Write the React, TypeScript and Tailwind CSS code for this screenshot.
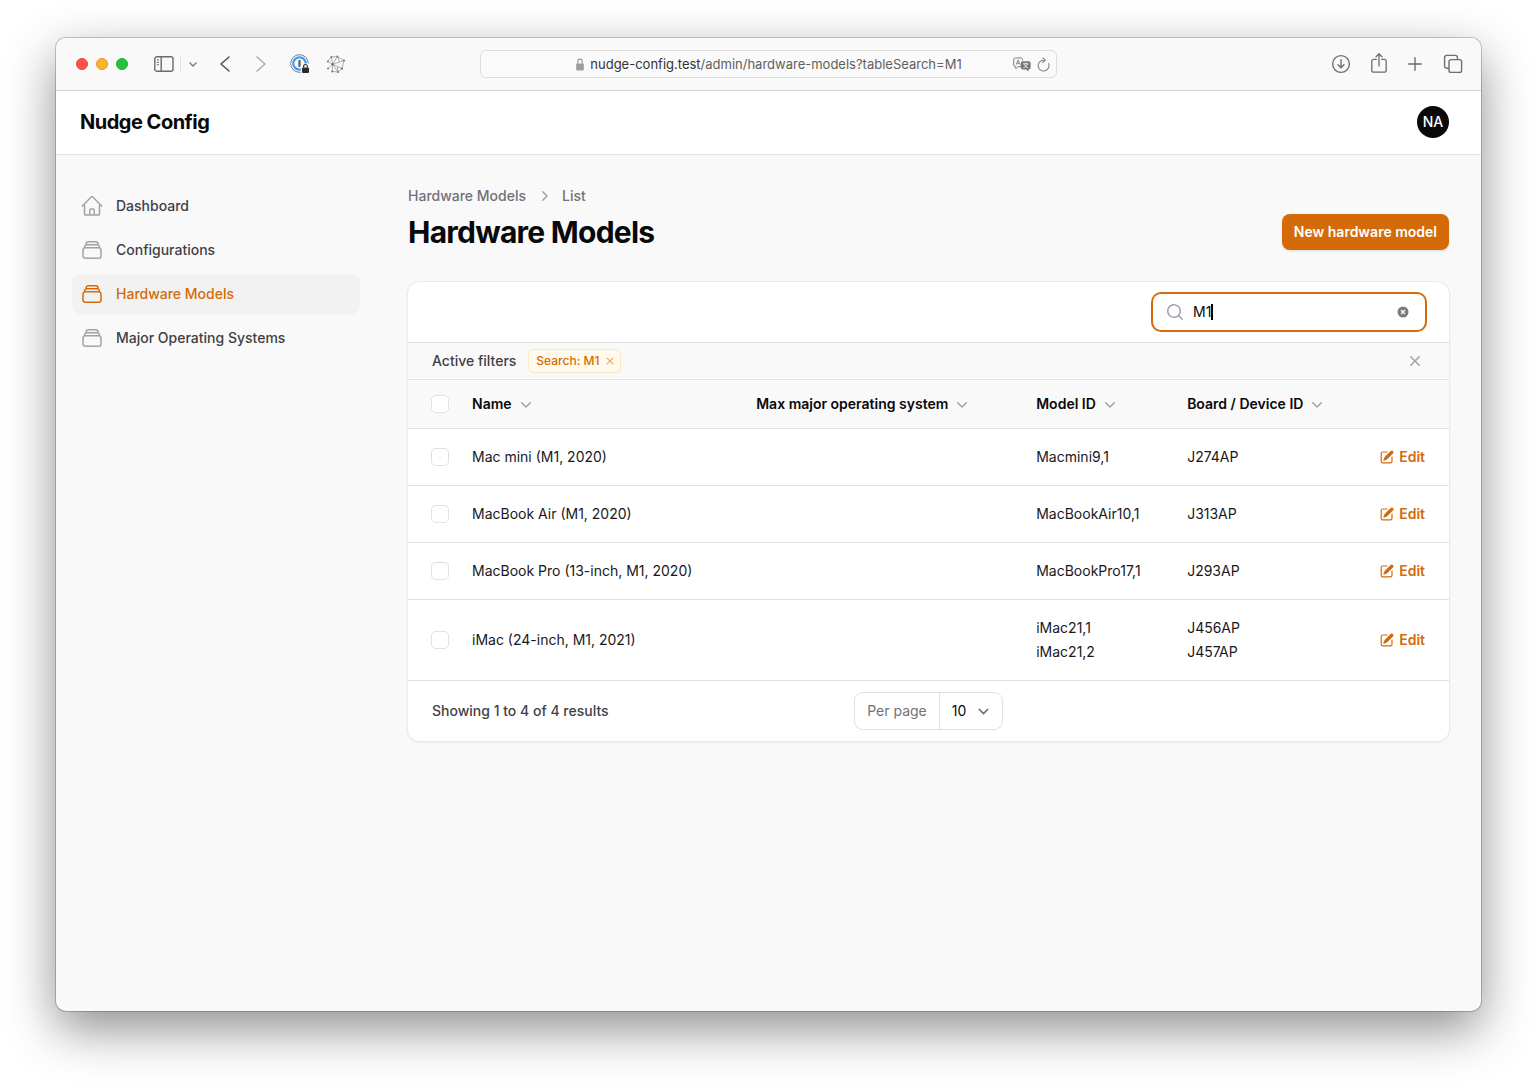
import React, { useState } from "react";
import {
  HiOutlineHome,
  HiOutlineRectangleStack,
  HiMiniChevronDown,
  HiMiniChevronRight,
  HiMiniPencilSquare,
  HiMiniXMark,
  HiMiniMagnifyingGlass,
} from "react-icons/hi2";

const SidebarIcon = () => (
  <svg width="20" height="16" viewBox="0 0 20 16" fill="none" stroke="#6a6a6a" strokeWidth="1.4">
    <rect x="0.8" y="0.8" width="18.2" height="14.4" rx="2" />
    <path d="M7.2 1v14" />
    <path d="M2.8 4h2.2M2.8 6.4h2.2M2.8 8.8h2.2" strokeWidth="1" />
  </svg>
);

const Chevron = ({ d, w, h, color, stroke }: { d: string; w: number; h: number; color: string; stroke: number }) => (
  <svg width={w} height={h} viewBox={`0 0 ${w} ${h}`} fill="none" stroke={color} strokeWidth={stroke} strokeLinecap="round" strokeLinejoin="round">
    <path d={d} />
  </svg>
);

const PasswordIcon = () => (
  <svg width="20" height="20" viewBox="0 0 20 20" fill="none">
    <circle cx="9.5" cy="9.5" r="8.8" stroke="#7b7b7b" strokeWidth="1" />
    <circle cx="9.5" cy="9.5" r="6.2" stroke="#3f9bff" strokeWidth="2.2" />
    <rect x="8.4" y="6" width="2.2" height="7" rx="0.6" fill="#5a5a5a" />
    <rect x="10.8" y="9.4" width="9.2" height="10.6" rx="2" fill="#f9f9f9" />
    <rect x="12" y="13.4" width="7" height="5.6" rx="1" fill="#2a2a2a" />
    <path d="M13.6 13.6v-1.2a1.9 1.9 0 0 1 3.8 0v1.2" stroke="#2a2a2a" strokeWidth="1.2" />
  </svg>
);

const NetworkIcon = () => (
  <svg width="20" height="20" viewBox="0 0 20 20" fill="none" stroke="#8e8e8e" strokeWidth="0.7">
    <path d="M6.6 10.2L5.4 3M6.6 10.2L11.4 2.6M6.6 10.2L18 6.6M6.6 10.2L1.8 7.4M6.6 10.2L2 14.4M6.6 10.2L6.2 17.4M6.6 10.2L12 18M6.6 10.2L16 14.6" />
    <path d="M1.8 7.4L5.4 3L11.4 2.6L18 6.6L16 14.6L12 18L6.2 17.4M11.4 2.6L13.6 8M12 18L11.4 12.4" />
    <g fill="#7a7a7a" stroke="none">
      <circle cx="6.6" cy="10.2" r="1.3" />
      <circle cx="5.4" cy="3" r="1" />
      <circle cx="11.4" cy="2.6" r="1" />
      <circle cx="18" cy="6.6" r="1.1" />
      <circle cx="1.8" cy="7.4" r="1" />
      <circle cx="2" cy="14.4" r="1" />
      <circle cx="6.2" cy="17.4" r="1" />
      <circle cx="12" cy="18" r="1.1" />
      <circle cx="16" cy="14.6" r="1.1" />
    </g>
  </svg>
);

const LockIcon = () => (
  <svg width="8" height="13" viewBox="0 0 8 13" fill="none">
    <rect x="0.2" y="5.4" width="7.6" height="7" rx="1.2" fill="#9c9c9c" />
    <path d="M1.8 6V3.4a2.2 2.2 0 0 1 4.4 0V6" stroke="#9c9c9c" strokeWidth="1.2" />
  </svg>
);

const TranslateIcon = () => (
  <svg width="18" height="15" viewBox="0 0 18 15" fill="none">
    <path d="M8 9.6H5L2.8 11.8V9.6H2.4A1.7 1.7 0 0 1 .7 7.9V2.6A1.7 1.7 0 0 1 2.4.9h5.4a1.7 1.7 0 0 1 1.7 1.7v1" stroke="#7f7f7f" strokeWidth="1" />
    <path d="M3.2 7.8L5.1 2.8L7 7.8M3.9 6.2h2.5" stroke="#7f7f7f" strokeWidth="0.9" />
    <path d="M9.6 4.2h6.2A1.8 1.8 0 0 1 17.6 6v4.6a1.8 1.8 0 0 1-1.8 1.8h-.3v2.2l-2.3-2.2H9.6a1.8 1.8 0 0 1-1.8-1.8V6a1.8 1.8 0 0 1 1.8-1.8Z" fill="#757575" />
    <path d="M10 6.8h5.4M12.7 5.6v1.2M14.4 6.9c-.5 1.8-2 3.2-4 3.9M11.2 7.2c.6 1.7 2 3 3.9 3.6" stroke="#f9f9f9" strokeWidth="0.9" />
  </svg>
);

const ReloadIcon = () => (
  <svg width="13" height="15" viewBox="0 0 13 15" fill="none" stroke="#858585" strokeWidth="1.1" strokeLinecap="round" strokeLinejoin="round">
    <path d="M11.6 6.6A5.4 5.4 0 1 1 6.5 3.2h1.4" />
    <path d="M5.8 0.8L8.2 3.2L5.8 5.6" />
  </svg>
);

const toolbarIcon = "flex h-7 items-center justify-center";

function BrowserBar() {
  return (
    <div className="grid h-[52px] shrink-0 grid-cols-[1fr_40.5%_1fr] items-center bg-[#f9f9f9]">
      <div className="flex items-center pl-5">
        <div className="flex gap-2">
          <button aria-label="Close window" className="size-3 rounded-full border border-[#e2443c] bg-[#ff5149]" />
          <button aria-label="Minimise window" className="size-3 rounded-full border border-[#e09c1e] bg-[#fdb32a]" />
          <button aria-label="Zoom window" className="size-3 rounded-full border border-[#1eae2e] bg-[#25c138]" />
        </div>
        <button aria-label="Sidebar" className={`${toolbarIcon} ml-6 w-6`}><SidebarIcon /></button>
        <span className="ml-1 h-[18px] w-px bg-[#e4e4e4]" />
        <button aria-label="Sidebar options" className={`${toolbarIcon} w-6`}>
          <Chevron d="M1 1l3 3l3-3" w={8} h={5} color="#7a7a7a" stroke={1.4} />
        </button>
        <button aria-label="Back" className={`${toolbarIcon} ml-2 w-6`}>
          <Chevron d="M9 1L1 8L9 15" w={10} h={16} color="#505050" stroke={1.5} />
        </button>
        <button aria-label="Forward" className={`${toolbarIcon} ml-3 w-6`}>
          <Chevron d="M1 1L9 8L1 15" w={10} h={16} color="#acacac" stroke={1.5} />
        </button>
        <button aria-label="Password manager" className={`${toolbarIcon} ml-[15px] w-6`}><PasswordIcon /></button>
        <button aria-label="Network extension" className={`${toolbarIcon} ml-3 w-6`}><NetworkIcon /></button>
      </div>
      <div className="flex h-7 items-center rounded-md border border-[#dcdcdc] bg-[#fafafa] pr-1.5 pl-11">
        <div className="flex flex-1 items-center justify-center gap-1.5 text-[13px] leading-4 text-[#606060]">
          <LockIcon />
          <span><span className="text-[#333333]">nudge-config.test</span>/admin/hardware-models?tableSearch=M1</span>
        </div>
        <div className="flex items-center gap-1.5">
          <button aria-label="Translate"><TranslateIcon /></button>
          <button aria-label="Reload"><ReloadIcon /></button>
        </div>
      </div>
      <div className="flex items-center justify-end gap-3 pr-4">
        <button aria-label="Downloads" className={`${toolbarIcon} w-6`}>
          <svg width="20" height="20" viewBox="0 0 20 20" fill="none" stroke="#6e6e6e" strokeWidth="1.4" strokeLinecap="round" strokeLinejoin="round">
            <circle cx="10" cy="10" r="8.4" />
            <path d="M10 5.6v8M7 10.8l3 3l3-3" />
          </svg>
        </button>
        <button aria-label="Share" className={`${toolbarIcon} w-7`}>
          <svg width="16" height="22" viewBox="0 0 16 22" fill="none" stroke="#6e6e6e" strokeWidth="1.3" strokeLinecap="round" strokeLinejoin="round">
            <path d="M5.2 6.4H2.6A1.8 1.8 0 0 0 .8 8.2v9.2A1.8 1.8 0 0 0 2.6 19.2h10.800a1.8 1.8 0 0 0 1.8-1.8V8.2A1.8 1.8 0 0 0 13.4 6.4h-2.6" />
            <path d="M8 13V.9M5 3.7l3-3l3 3" />
          </svg>
        </button>
        <button aria-label="New tab" className={`${toolbarIcon} w-5`}>
          <svg width="14" height="14" viewBox="0 0 14 14" fill="none" stroke="#6e6e6e" strokeWidth="1.4" strokeLinecap="round">
            <path d="M7 0.7v12.6M0.7 7h12.6" />
          </svg>
        </button>
        <button aria-label="Tab overview" className={`${toolbarIcon} ml-1 w-6`}>
          <svg width="20" height="20" viewBox="0 0 20 20" fill="none" stroke="#6e6e6e" strokeWidth="1.4" strokeLinejoin="round">
            <rect x="6" y="5.6" width="12.6" height="12.8" rx="2" />
            <path d="M5.8 14.2H3.6a2 2 0 0 1-2-2V3.4a2 2 0 0 1 2-2h8.800a2 2 0 0 1 2 2v2" />
          </svg>
        </button>
      </div>
    </div>
  );
}

const navItems = [
  { label: "Dashboard", icon: HiOutlineHome, active: false },
  { label: "Configurations", icon: HiOutlineRectangleStack, active: false },
  { label: "Hardware Models", icon: HiOutlineRectangleStack, active: true },
  { label: "Major Operating Systems", icon: HiOutlineRectangleStack, active: false },
];

function Sidebar() {
  return (
    <nav className="w-80 shrink-0 px-4 py-8">
      <ul className="flex flex-col gap-1">
        {navItems.map(({ label, icon: Icon, active }) => (
          <li key={label}>
            <a
              href="#"
              className={
                active
                  ? "flex h-10 items-center gap-3 rounded-lg bg-[#f2f2f2] px-2 text-sm font-medium text-[#d46b08]"
                  : "flex h-10 items-center gap-3 rounded-lg px-2 text-sm font-medium text-[#3f3f46]"
              }
            >
              <Icon className={active ? "size-6 text-[#d46b08]" : "size-6 text-[#a1a1aa]"} />
              {label}
            </a>
          </li>
        ))}
      </ul>
    </nav>
  );
}

const Checkbox = ({ label }: { label: string }) => (
  <input
    type="checkbox"
    aria-label={label}
    className="block size-4 appearance-none rounded bg-white ring-1 ring-[#e1e1e3] checked:bg-[#d46b08]"
  />
);

const columns = ["Name", "Max major operating system", "Model ID", "Board / Device ID"];

const rows = [
  { name: "Mac mini (M1, 2020)", models: ["Macmini9,1"], boards: ["J274AP"] },
  { name: "MacBook Air (M1, 2020)", models: ["MacBookAir10,1"], boards: ["J313AP"] },
  { name: "MacBook Pro (13-inch, M1, 2020)", models: ["MacBookPro17,1"], boards: ["J293AP"] },
  { name: "iMac (24-inch, M1, 2021)", models: ["iMac21,1", "iMac21,2"], boards: ["J456AP", "J457AP"] },
];

const Lines = ({ items }: { items: string[] }) => (
  <ul>
    {items.map((item) => (
      <li key={item} className="leading-6">{item}</li>
    ))}
  </ul>
);

function ModelTable() {
  return (
    <div className="border-t border-[#e1e1e1]">
      <table className="w-full table-fixed text-left text-sm">
        <colgroup>
          <col className="w-[52px]" />
          <col className="w-[27.3%]" />
          <col className="w-[26.9%]" />
          <col className="w-[14.5%]" />
          <col />
          <col className="w-24" />
        </colgroup>
        <thead>
          <tr className="h-12 bg-[#f9f9f9]">
            <th className="pl-6"><Checkbox label="Select all" /></th>
            {columns.map((column) => (
              <th key={column} className="px-3 font-semibold text-[#09090b]">
                <button className="flex items-center gap-1 whitespace-nowrap">
                  {column}
                  <HiMiniChevronDown className="size-5 text-[#a1a1aa]" />
                </button>
              </th>
            ))}
            <th aria-label="Actions" />
          </tr>
        </thead>
        <tbody>
          {rows.map((row) => (
            <tr key={row.name} className="border-t border-[#e1e1e1] text-[#18181b]">
              <td className="pl-6"><Checkbox label={`Select ${row.name}`} /></td>
              <td className="px-3 py-4 leading-6">{row.name}</td>
              <td />
              <td className="px-3 py-4"><Lines items={row.models} /></td>
              <td className="px-3 py-4"><Lines items={row.boards} /></td>
              <td className="pr-6">
                <a href="#" className="flex items-center justify-end gap-1 font-semibold text-[#d46b08]">
                  <HiMiniPencilSquare className="size-4" />
                  Edit
                </a>
              </td>
            </tr>
          ))}
        </tbody>
      </table>
    </div>
  );
}

export default function App() {
  const [query, setQuery] = useState("M1");
  return (
    <div className="flex min-h-screen flex-col bg-white px-14 pt-[38px] pb-[74px] font-['Inter',sans-serif]">
      <div className="flex flex-1 flex-col overflow-hidden rounded-[10px] bg-[#f9f9f9] shadow-[0_0_0_1px_rgba(0,0,0,0.2),0_18px_50px_rgba(0,0,0,0.45)]">
        <BrowserBar />
        <header className="relative flex h-16 shrink-0 items-center justify-between bg-white pr-8 pl-6 shadow-[0_1px_0_#e2e2e2,inset_0_1px_0_#d2d2d2]">
          <div className="text-xl font-bold tracking-tight text-[#09090b]">Nudge Config</div>
          <button aria-label="User menu" className="size-8 rounded-full bg-[#09090b] text-sm font-medium text-white">NA</button>
        </header>
        <div className="flex flex-1">
          <Sidebar />
          <main className="min-w-0 flex-1 px-8 py-8">
            <nav aria-label="Breadcrumb" className="flex items-center gap-x-2 text-sm font-medium text-[#71717a]">
              <a href="#">Hardware Models</a>
              <HiMiniChevronRight className="size-5 text-[#a1a1aa]" />
              <a href="#">List</a>
            </nav>
            <div className="mt-2 flex items-center justify-between">
              <h1 className="text-3xl font-bold tracking-tight text-[#09090b]">Hardware Models</h1>
              <button className="h-9 rounded-lg bg-[#d46b08] px-3 text-sm font-semibold text-white shadow-sm">New hardware model</button>
            </div>

            <section className="mt-8 overflow-hidden rounded-xl bg-white shadow-sm ring-1 ring-[#ebebeb]">
              <div className="flex justify-end px-6 py-3">
                <div className="flex h-9 w-[272px] items-center gap-2 rounded-lg bg-white pr-4 pl-3 ring-2 ring-[#d46b08]">
                  <HiMiniMagnifyingGlass className="size-5 shrink-0 text-[#a1a1aa]" />
                  <span className="relative flex min-w-0 flex-1 items-center">
                    <input
                      type="text"
                      aria-label="Search"
                      value={query}
                      onChange={(event) => setQuery(event.target.value)}
                      className="w-full bg-transparent text-sm text-[#09090b] caret-transparent outline-none"
                    />
                    <span className="absolute left-[18px] h-4 w-0.5 bg-black" />
                  </span>
                  <button aria-label="Clear search" onClick={() => setQuery("")} className="flex size-3 items-center justify-center">
                    <svg width="12" height="12" viewBox="0 0 12 12">
                      <circle cx="6" cy="6" r="5.5" fill="#7b7b7b" />
                      <path d="M4 4l4 4M8 4l-4 4" stroke="#fff" strokeWidth="1.2" />
                    </svg>
                  </button>
                </div>
              </div>

              <div className="flex items-center justify-between border-t border-[#e1e1e1] bg-[#f9f9f9] px-6 py-1.5">
                <div className="flex items-center gap-3">
                  <span className="text-sm font-medium text-[#3f3f46]">Active filters</span>
                  <span className="flex h-6 items-center gap-1 rounded-md bg-[#fffaeb] pr-1 pl-2 text-xs font-medium text-[#d46b08] ring-1 ring-[#fbe7c8] ring-inset">
                    Search: M1
                    <button aria-label="Remove filter"><HiMiniXMark className="size-3.5 text-[#d46b08]/60" /></button>
                  </span>
                </div>
                <button aria-label="Remove all filters"><HiMiniXMark className="size-5 text-[#a1a1aa]" /></button>
              </div>

              <ModelTable />

              <div className="grid grid-cols-[1fr_auto_1fr] items-center border-t border-[#e1e1e1] px-6 py-3">
                <span className="text-sm font-medium text-[#3f3f46]">Showing 1 to 4 of 4 results</span>
                <div className="flex h-9 items-stretch rounded-lg text-sm ring-1 ring-[#e1e1e3]">
                  <label htmlFor="per-page" className="flex items-center border-r border-[#e1e1e3] px-3 text-[#71717a]">Per page</label>
                  <div className="relative flex">
                    <select id="per-page" defaultValue="10" className="w-[62px] appearance-none bg-transparent pl-3 text-[#09090b] outline-none">
                      <option>5</option>
                      <option>10</option>
                      <option>25</option>
                      <option>50</option>
                    </select>
                    <svg className="pointer-events-none absolute top-2 right-2" width="21" height="21" viewBox="0 0 20 20" fill="none" stroke="#6b7280" strokeWidth="1.5" strokeLinecap="round" strokeLinejoin="round">
                      <path d="M6 8l4 4 4-4" />
                    </svg>
                  </div>
                </div>
              </div>
            </section>
          </main>
        </div>
      </div>
    </div>
  );
}
